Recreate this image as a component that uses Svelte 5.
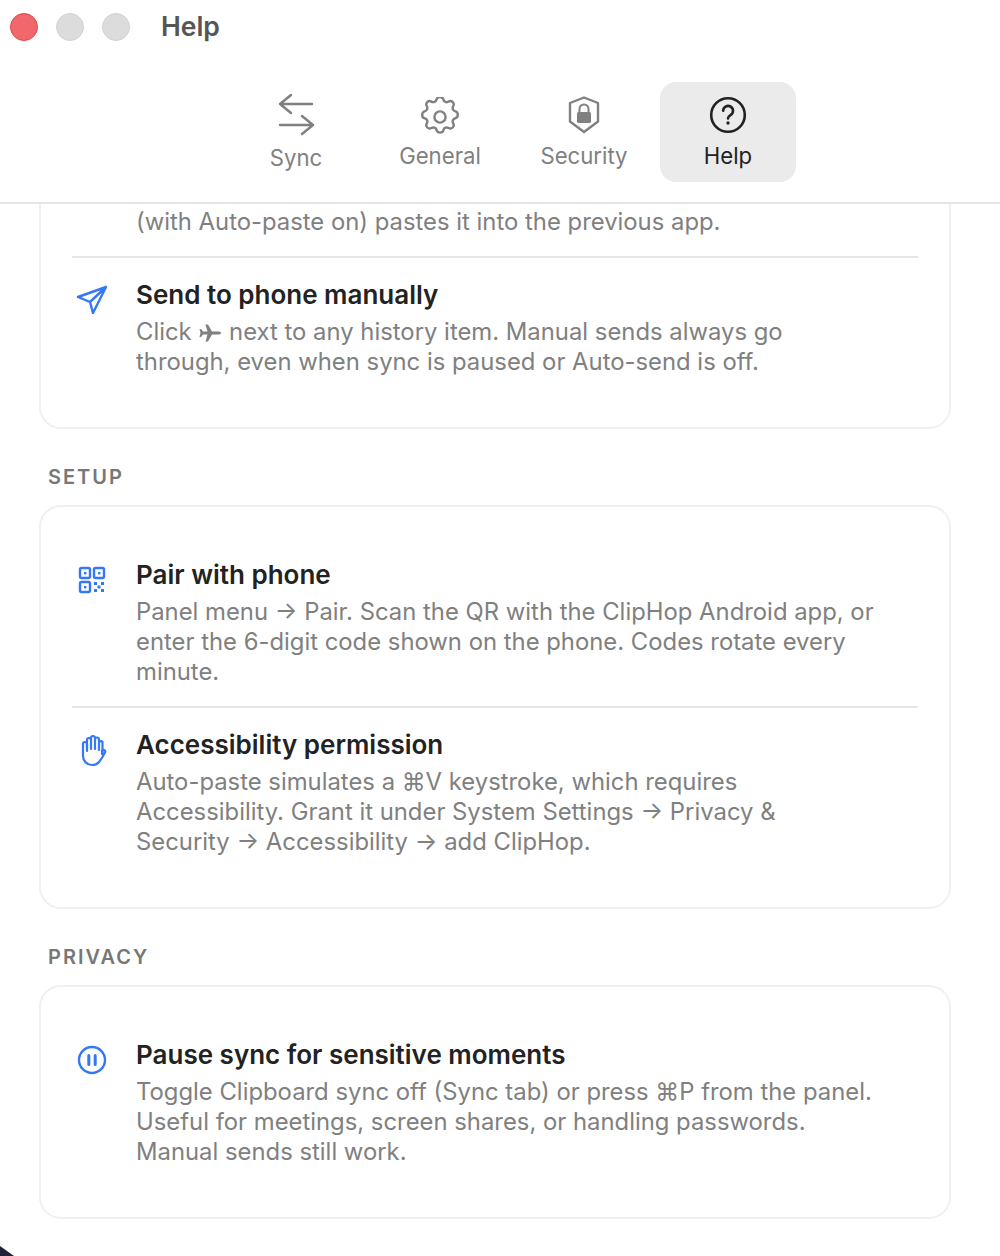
<script lang="ts">
	const tabs = [
		{ id: 'sync', label: 'Sync' },
		{ id: 'general', label: 'General' },
		{ id: 'security', label: 'Security' },
		{ id: 'help', label: 'Help' }
	];
	let active = $state('help');
</script>

<div class="window">
	<header class="header">
		<div class="titlebar">
			<span class="light red"></span>
			<span class="light"></span>
			<span class="light"></span>
			<h1>Help</h1>
		</div>
		<nav class="tabs">
			{#each tabs as tab (tab.id)}
				<button class="tab {tab.id}" class:active={active === tab.id} onclick={() => (active = tab.id)}>
					{#if tab.id === 'sync'}
						<svg width="40" height="44" viewBox="0 0 40 44" fill="none" stroke="currentColor" stroke-width="2.4" stroke-linecap="round" stroke-linejoin="round">
							<path d="M36 11H4M15 2 4 11l11 9" />
							<path d="M4 32h33M26 23l11 9-11 9" />
						</svg>
					{:else if tab.id === 'general'}
						<svg width="40" height="40" viewBox="2 2 20 20" fill="none" stroke="currentColor" stroke-width="1.2" stroke-linecap="round" stroke-linejoin="round">
							<path d="M10.3 3.2c.4-1.6 2.9-1.6 3.4 0a1.7 1.7 0 0 0 2.6 1.1c1.5-.9 3.2.8 2.3 2.3a1.7 1.7 0 0 0 1.1 2.6c1.6.4 1.6 2.9 0 3.4a1.7 1.7 0 0 0-1.1 2.6c.9 1.5-.8 3.2-2.3 2.3a1.7 1.7 0 0 0-2.6 1.1c-.4 1.6-2.9 1.6-3.4 0a1.7 1.7 0 0 0-2.6-1.1c-1.5.9-3.2-.8-2.3-2.3a1.7 1.7 0 0 0-1.1-2.6c-1.6-.4-1.6-2.9 0-3.4a1.7 1.7 0 0 0 1.1-2.6c-.9-1.5.8-3.2 2.3-2.3 1 .6 2.3.1 2.6-1.1z" />
							<circle cx="12" cy="12" r="2.8" />
						</svg>
					{:else if tab.id === 'security'}
						<svg width="40" height="40" viewBox="0 0 40 40" fill="none">
							<path d="M20 2.5 34 8v18.500L20 37 6 26.500V8z" stroke="currentColor" stroke-width="2.4" stroke-linejoin="round" />
							<rect x="13" y="17" width="14" height="11" rx="1.500" fill="currentColor" />
							<path d="M15.500 17v-3a4.500 4.500 0 0 1 9 0v3" stroke="currentColor" stroke-width="2" />
						</svg>
					{:else}
						<svg width="40" height="40" viewBox="0 0 40 40" fill="none" stroke="currentColor">
							<circle cx="20" cy="20" r="16.800" stroke-width="2.6" />
							<path d="M15.200 15.800a4.900 4.900 0 1 1 7.600 4.100c-1.700 1.100-2.800 1.900-2.800 3.600" stroke-width="2.6" stroke-linecap="round" />
							<circle cx="20" cy="28" r="1.700" fill="currentColor" stroke="none" />
						</svg>
					{/if}
					<span>{tab.label}</span>
				</button>
			{/each}
		</nav>
	</header>

	<main class="scroll">
		<div class="content">
			<section class="card first">
				<div class="row clipped">
					<div class="text">
						<p>(with Auto-paste on) pastes it into the previous app.</p>
					</div>
				</div>
				<div class="row">
					<svg class="icon" width="40" height="40" viewBox="0 0 40 40" fill="none" stroke="currentColor" stroke-width="2.4" stroke-linecap="round" stroke-linejoin="round">
						<path d="M34 7 6 17l12 5 3 11zM34 7 18 22" />
					</svg>
					<div class="text">
						<h3>Send to phone manually</h3>
						<p>
							Click
							<svg class="plane" width="22" height="18" viewBox="0 0 22 18" fill="currentColor">
								<path d="M22 9c0-1-1.500-1.500-3-1.500h-6L9 .5H6.500l2 7H4L2 5H.5l1 4-1 4H2l2-2.500h4.500l-2 7H9l4-7h6c1.500 0 3-.5 3-1.500z" />
							</svg>
							next to any history item. Manual sends always go<br />
							through, even when sync is paused or Auto-send is off.
						</p>
					</div>
				</div>
			</section>

			<h2>SETUP</h2>
			<section class="card">
				<div class="row">
					<svg class="icon" width="40" height="40" viewBox="0 0 40 40" fill="none" stroke="currentColor" stroke-width="2.4" stroke-linejoin="round">
						<rect x="8" y="8" width="10" height="10" rx="1.500" />
						<rect x="22" y="8" width="10" height="10" rx="1.500" />
						<rect x="8" y="22" width="10" height="10" rx="1.500" />
						<g fill="currentColor" stroke="none">
							<rect x="12" y="12" width="2.4" height="2.4" />
							<rect x="26" y="12" width="2.4" height="2.4" />
							<rect x="12" y="26" width="2.4" height="2.4" />
							<rect x="22" y="22" width="3" height="3" />
							<rect x="29" y="22" width="3" height="3" />
							<rect x="25.500" y="25.500" width="3" height="3" />
							<rect x="22" y="29" width="3" height="3" />
							<rect x="29" y="29" width="3" height="3" />
						</g>
					</svg>
					<div class="text">
						<h3>Pair with phone</h3>
						<p>
							Panel menu → Pair. Scan the QR with the ClipHop Android app, or<br />
							enter the 6-digit code shown on the phone. Codes rotate every<br />
							minute.
						</p>
					</div>
				</div>
				<div class="row">
					<svg class="icon" width="40" height="40" viewBox="0 0 40 40" fill="none" stroke="currentColor" stroke-width="2.2" stroke-linecap="round" stroke-linejoin="round">
						<path d="M15 19V10a2 2 0 0 1 4 0v9M19 17V8a2 2 0 0 1 4 0v11M23 17V9.500a2 2 0 0 1 4 0V20M27 18v-5.500a2 2 0 0 1 3.500-.5V24" />
						<path d="M15 21v-7a2 2 0 0 0-4 0v12c0 5 4 9 9 9 3.500 0 5.500-1 7.500-3.500l3-4.500 2.500-4.500c1-2-1.500-3.500-3-2L30 24" />
					</svg>
					<div class="text">
						<h3>Accessibility permission</h3>
						<p>
							Auto-paste simulates a ⌘V keystroke, which requires<br />
							Accessibility. Grant it under System Settings → Privacy &amp;<br />
							Security → Accessibility → add ClipHop.
						</p>
					</div>
				</div>
			</section>

			<h2>PRIVACY</h2>
			<section class="card">
				<div class="row">
					<svg class="icon" width="40" height="40" viewBox="0 0 40 40" fill="none" stroke="currentColor" stroke-width="2.4" stroke-linecap="round">
						<circle cx="20" cy="20" r="13" />
						<path d="M16.800 15.500v9M23.200 15.500v9" stroke-width="3" />
					</svg>
					<div class="text">
						<h3>Pause sync for sensitive moments</h3>
						<p>
							Toggle Clipboard sync off (Sync tab) or press ⌘P from the panel.<br />
							Useful for meetings, screen shares, or handling passwords.<br />
							Manual sends still work.
						</p>
					</div>
				</div>
			</section>
		</div>
	</main>
	<span class="corner tl"></span>
	<span class="corner bl"></span>
</div>

<style>
	:global(body) {
		margin: 0;
		background: #fff;
	}

	.window {
		position: relative;
		width: 1000px;
		height: 1256px;
		overflow: hidden;
		background: #fff;
		display: flex;
		flex-direction: column;
		font-family: Inter, "Noto Sans", sans-serif;
	}

	.header {
		height: 202px;
		flex-shrink: 0;
		border-bottom: 2px solid #e5e5e5;
		background: #fff;
		position: relative;
		z-index: 1;
	}

	.titlebar {
		display: flex;
		align-items: center;
		gap: 18px;
		height: 54px;
		padding-left: 10px;
	}

	.light {
		width: 28px;
		height: 28px;
		box-sizing: border-box;
		border-radius: 50%;
		background: #dcdcdc;
		border: 1px solid #d2d2d2;
	}

	.light.red {
		background: #f0686b;
		border-color: #e0484a;
	}

	.titlebar h1 {
		margin: -2px 0 0 13px;
		font-size: 26.5px;
		font-weight: 600;
		color: #555;
	}

	.tabs {
		display: flex;
		justify-content: center;
		gap: 8px;
		padding: 28px 0 0 24px;
	}

	.tab {
		width: 136px;
		height: 100px;
		box-sizing: border-box;
		padding: 13px 0 0;
		background: none;
		border: none;
		border-radius: 16px;
		color: #808080;
		font: inherit;
		font-size: 22.2px;
		display: flex;
		flex-direction: column;
		align-items: center;
		cursor: pointer;
	}

	.tab span {
		line-height: 28px;
		margin-top: 7px;
	}

	.tab.sync svg {
		margin-top: -2px;
	}

	.tab.general svg {
		margin: 2px 0 -2px;
	}

	.tab.active {
		background: #ebebeb;
		color: #222;
	}

	.scroll {
		flex: 1;
		min-height: 0;
		overflow: hidden;
	}

	.content {
		padding: 0 49px 0 39px;
		margin-top: -30px;
	}

	.card {
		border: 2px solid #f0f0f0;
		border-radius: 22px;
		padding: 31px 31px 31px;
		background: #fff;
	}

	.row {
		display: flex;
		gap: 24px;
		padding: 20px 0 19px;
		border-top: 2px solid #e5e5e5;
	}

	.row:first-child {
		border-top: none;
	}

	.row.clipped {
		padding: 0 0 19px 64px;
	}

	.icon {
		width: 40px;
		height: 40px;
		flex-shrink: 0;
		margin-top: 2px;
		color: #3478f6;
	}

	.text {
		flex: 1;
		min-width: 0;
	}

	h2 {
		margin: 36px 0 16px 9px;
		font-size: 20px;
		line-height: 24px;
		font-weight: 600;
		letter-spacing: 2px;
		color: #777;
	}

	h3 {
		margin: 0 0 5px;
		font-size: 26px;
		line-height: 34px;
		font-weight: 600;
		color: #222;
	}

	p {
		margin: 0;
		font-size: 23.85px;
		line-height: 30px;
		color: #808080;
	}

	.plane {
		vertical-align: -2px;
		margin: 0 1px;
	}

	.corner {
		position: absolute;
		left: 0;
	}

	.corner.tl {
		top: 0;
		width: 6px;
		height: 6px;
		background: #555;
		clip-path: polygon(0 0, 100% 0, 0 100%);
	}

	.corner.bl {
		bottom: 0;
		width: 14px;
		height: 10px;
		background: #22223a;
		clip-path: polygon(0 0, 100% 100%, 0 100%);
	}
</style>
